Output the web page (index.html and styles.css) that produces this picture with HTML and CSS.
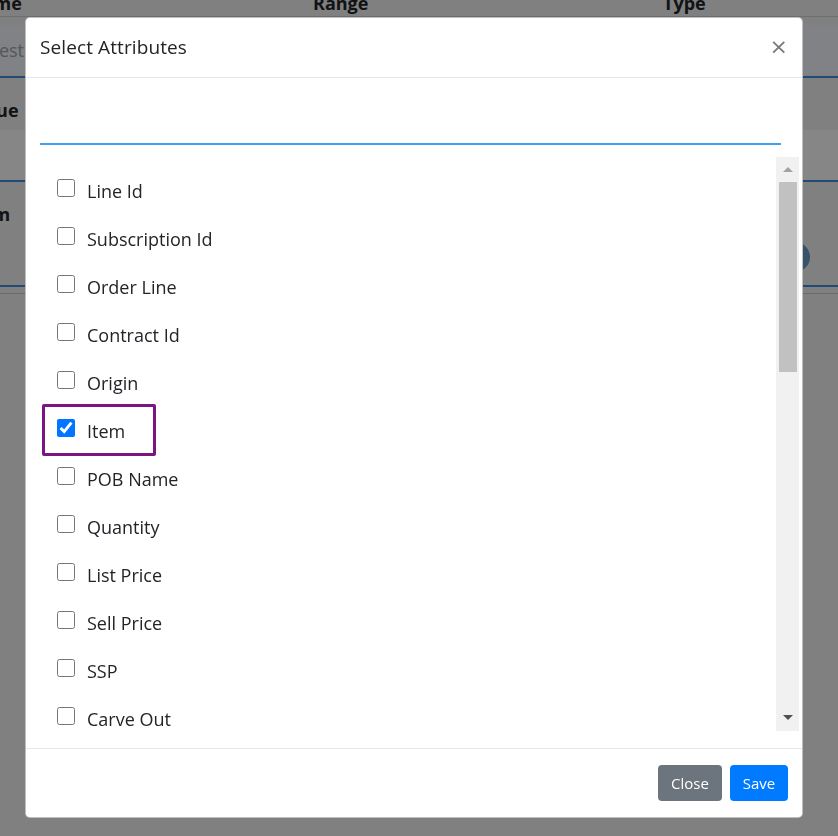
FILE: index.html
```html
<!DOCTYPE html>
<html lang="en">
<head>
<meta charset="utf-8">
<title>Select Attributes</title>
<link rel="stylesheet" href="styles.css">
</head>
<body>
<div class="page">
  <div class="thead">
    <span class="th">Name</span>
    <span class="th">Range</span>
    <span class="th">Type</span>
  </div>
  <div class="prow prow-1">
    <div class="fake-input">Testing</div>
  </div>
  <div class="prow prow-2">
    <b class="plabel">Value</b>
    <div class="band"></div>
  </div>
  <div class="prow prow-3">
    <b class="plabel">Item</b>
    <span class="dot"></span>
  </div>
  <div class="prule"></div>
</div>

<div class="backdrop"></div>

<div class="modal">
  <div class="modal-header">
    <h5 class="modal-title">Select Attributes</h5>
    <button class="btn-x" type="button">&times;</button>
  </div>
  <div class="modal-body">
    <div class="search"></div>
    <div class="listwrap">
      <div class="list">
        <label class="item"><input type="checkbox"><span>Line Id</span></label>
        <label class="item"><input type="checkbox"><span>Subscription Id</span></label>
        <label class="item"><input type="checkbox"><span>Order Line</span></label>
        <label class="item"><input type="checkbox"><span>Contract Id</span></label>
        <label class="item"><input type="checkbox"><span>Origin</span></label>
        <label class="item item-marked"><input type="checkbox" checked><span>Item</span><span class="mark"></span></label>
        <label class="item"><input type="checkbox"><span>POB Name</span></label>
        <label class="item"><input type="checkbox"><span>Quantity</span></label>
        <label class="item"><input type="checkbox"><span>List Price</span></label>
        <label class="item"><input type="checkbox"><span>Sell Price</span></label>
        <label class="item"><input type="checkbox"><span>SSP</span></label>
        <label class="item"><input type="checkbox"><span>Carve Out</span></label>
        <label class="item"><input type="checkbox"><span>Discount</span></label>
      </div>
      <div class="sbar">
        <div class="sbtn"><span class="tri-up"></span></div>
        <div class="sthumb"></div>
        <div class="sfill"></div>
        <div class="sbtn sbtn-down"><span class="tri-down"></span></div>
      </div>
    </div>
  </div>
  <div class="modal-footer">
    <button class="btn btn-close" type="button">Close</button>
    <button class="btn btn-save" type="button">Save</button>
  </div>
</div>
</body>
</html>
```

FILE: styles.css
```css
html, body {
  margin: 0;
  height: 836px;
  overflow: hidden;
}
body {
  font-family: "Open Sans", "Noto Sans", sans-serif;
  background: #f2f2f2;
  color: #212529;
}

/* ---------- underlying page ---------- */
.page {
  margin: -9px 0 0 -40px;
}
.thead {
  display: grid;
  grid-template-columns: 353px 350px 1fr;
  height: 25px;
  line-height: 25px;
  font-size: 18px;
  font-weight: 700;
  border-bottom: 1px solid #cfcfcf;
}
.th {
  padding-left: 8px;
}
.thead .th + .th {
  padding-left: 0;
}
.prow {
  border-bottom: 2px solid #3b8fdc;
  display: flex;
  flex-direction: column;
  box-sizing: border-box;
}
.prow-1 {
  height: 61px;
  padding-top: 8px;
}
.fake-input {
  height: 50px;
  background: #f2f6fc;
  color: #a0a4a8;
  font-size: 18px;
  line-height: 50px;
  padding-left: 29px;
}
.prow-2 {
  height: 104px;
  padding-top: 18px;
}
.plabel {
  font-size: 18px;
  line-height: 28px;
  padding-left: 8px;
}
.band {
  margin-top: auto;
  height: 50px;
  background: #fdfdff;
}
.prow-3 {
  height: 105px;
  padding-top: 18px;
  position: relative;
}
.dot {
  position: absolute;
  left: 820px;
  top: 60px;
  width: 30px;
  height: 30px;
  border-radius: 50%;
  background: #6a9cc8;
}
.prule {
  height: 6px;
  border-bottom: 1px solid #c8c8c8;
}

/* ---------- backdrop ---------- */
.backdrop {
  position: fixed;
  inset: 0;
  background: rgba(0, 0, 0, 0.47);
}

/* ---------- modal ---------- */
.modal {
  position: fixed;
  left: 25px;
  top: 17px;
  width: 778px;
  height: 801px;
  box-sizing: border-box;
  background: #fff;
  border: 1px solid rgba(0, 0, 0, 0.25);
  border-radius: 5px;
  display: flex;
  flex-direction: column;
  overflow: hidden;
}
.modal-header {
  height: 60px;
  box-sizing: border-box;
  flex: none;
  display: flex;
  align-items: center;
  justify-content: space-between;
  padding: 0 14px 2px 14px;
  border-bottom: 1px solid #e4e7ea;
}
.modal-title {
  margin: 0;
  font-size: 19px;
  font-weight: 400;
  color: #212529;
  letter-spacing: 0.1px;
}
.btn-x {
  border: 0;
  background: none;
  padding: 0;
  font-family: "DejaVu Sans", sans-serif;
  font-size: 22px;
  line-height: 1;
  color: #7a7a7a;
}

.modal-body {
  flex: 1;
  min-height: 0;
  display: flex;
  flex-direction: column;
  padding: 0 3px 17px 14px;
}
.search {
  flex: none;
  height: 40px;
  margin: 25px 18px 0 0;
  border-bottom: 2px solid #42a0ef;
}
.listwrap {
  flex: 1;
  min-height: 0;
  margin-top: 12px;
  display: flex;
  overflow: hidden;
}
.list {
  flex: 1;
  padding-top: 10px;
}
.item {
  height: 48px;
  display: flex;
  align-items: center;
  gap: 12px;
  padding-left: 17px;
  font-size: 18px;
  color: #212529;
  position: relative;
}
.item input {
  width: 18px;
  height: 18px;
  margin: 0 0 6px 0;
  accent-color: #0075ff;
}
.mark {
  position: absolute;
  left: 2px;
  top: -3px;
  width: 114px;
  height: 52px;
  box-sizing: border-box;
  border: 3px solid #7b1583;
  border-radius: 2px;
}

/* scrollbar */
.sbar {
  width: 23px;
  flex: none;
  background: #f1f1f1;
  display: flex;
  flex-direction: column;
}
.sbtn {
  height: 25px;
  flex: none;
  display: flex;
  align-items: center;
  justify-content: center;
}
.sbtn-down {
  height: 27px;
}
.tri-up {
  width: 0;
  height: 0;
  border-left: 5px solid transparent;
  border-right: 5px solid transparent;
  border-bottom: 5px solid #a3a3a3;
}
.tri-down {
  width: 0;
  height: 0;
  border-left: 5px solid transparent;
  border-right: 5px solid transparent;
  border-top: 5px solid #505050;
}
.sthumb {
  height: 190px;
  margin: 0 2px 0 3px;
  background: #c1c1c1;
  flex: none;
}
.sfill {
  flex: 1;
}

/* footer */
.modal-footer {
  flex: none;
  height: 69px;
  box-sizing: border-box;
  border-top: 1px solid #e4e7ea;
  display: flex;
  align-items: center;
  justify-content: flex-end;
  gap: 8px;
  padding: 0 14px;
}
.btn {
  height: 36px;
  border: 0;
  border-radius: 4px;
  padding: 0 12px;
  font-family: "Open Sans", "Noto Sans", sans-serif;
  font-size: 15px;
  color: #fff;
}
.btn-close {
  width: 64px;
  background: #6c757d;
}
.btn-save {
  width: 58px;
  background: #007bff;
}
```
